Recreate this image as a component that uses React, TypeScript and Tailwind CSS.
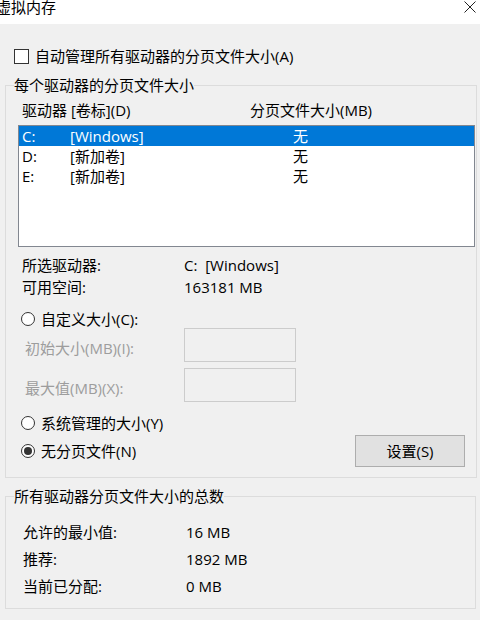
import React from "react";

const font = { fontFamily: '"Open Sans", "Noto Sans CJK SC", sans-serif' };

function Radio({ checked }: { checked?: boolean }) {
  return (
    <span className="w-[14px] h-[14px] rounded-full border border-[#333333] bg-white flex items-center justify-center shrink-0">
      {checked && <span className="w-[8px] h-[8px] rounded-full bg-[#333333]" />}
    </span>
  );
}

const drives = [
  { d: "C:", label: "[Windows]", size: "无", sel: true },
  { d: "D:", label: "[新加卷]", size: "无", sel: false },
  { d: "E:", label: "[新加卷]", size: "无", sel: false },
];

export default function App() {
  return (
    <div
      className="w-[480px] h-[620px] flex flex-col overflow-hidden text-[15px] text-black bg-[#f0f0f0]"
      style={font}
    >
      {/* Title bar */}
      <div className="h-[24px] bg-white flex justify-between items-start shrink-0">
        <span className="ml-[-4px] mt-[-3px] leading-[20px] text-[15px] text-black">虚拟内存</span>
        <svg width="12" height="12" viewBox="0 0 12 12" className="mt-[1px] mr-[4px]">
          <path d="M0.5 0.5 L11.5 11.5 M11.5 0.5 L0.5 11.5" stroke="#222" strokeWidth="1" fill="none" />
        </svg>
      </div>

      {/* Body */}
      <div className="flex-1 flex flex-col">
        {/* Checkbox */}
        <div className="mt-[22px] h-[20px] flex items-center pl-[14px] gap-[6px]">
          <span className="w-[15px] h-[15px] border border-[#333333] bg-white shrink-0" />
          <span className="leading-[20px]">自动管理所有驱动器的分页文件大小(A)</span>
        </div>

        {/* Group 1 */}
        <fieldset className="mt-[9px] ml-[5px] w-[472px] border border-[#dcdcdc] p-0 m-0 min-w-0">
          <legend className="ml-[8px] px-0 leading-[20px]">每个驱动器的分页文件大小</legend>
          <div className="flex flex-col pb-[10px]">
            <div className="mt-[5px] h-[20px] flex items-center pl-[16px] leading-[20px]">
              <span className="w-[228px]">驱动器 [卷标](D)</span>
              <span>分页文件大小(MB)</span>
            </div>
            <div className="mt-[5px] ml-[12px] mr-[1px] h-[122px] border border-[#828790] bg-white flex flex-col">
              {drives.map((r) => (
                <div
                  key={r.d}
                  className={
                    r.sel
                      ? "h-[20px] flex items-center pl-[3px] bg-[#0078d7] text-white leading-[20px]"
                      : "h-[20px] flex items-center pl-[3px] leading-[20px]"
                  }
                >
                  <span className="w-[48px]">{r.d}</span>
                  <span className="w-[223px]">{r.label}</span>
                  <span>{r.size}</span>
                </div>
              ))}
            </div>

            <div className="mt-[7px] h-[22px] flex items-center pl-[16px]">
              <span className="w-[162px]">所选驱动器:</span>
              <span className="whitespace-pre">C:  [Windows]</span>
            </div>
            <div className="h-[22px] flex items-center pl-[16px]">
              <span className="w-[162px]">可用空间:</span>
              <span>163181 MB</span>
            </div>

            <div className="mt-[12px] h-[18px] flex items-center pl-[15px] gap-[6px]">
              <Radio />
              <span className="leading-[18px]">自定义大小(C):</span>
            </div>
            <div className="h-[34px] flex items-center pl-[19px] text-[#9d9d9d]">
              <span className="w-[159px] pt-[6px] leading-[20px]">初始大小(MB)(I):</span>
              <span className="w-[112px] h-[34px] border border-[#cccccc] bg-[#f0f0f0]" />
            </div>
            <div className="mt-[6px] h-[34px] flex items-center pl-[19px] text-[#9d9d9d]">
              <span className="w-[159px] pt-[6px] leading-[20px]">最大值(MB)(X):</span>
              <span className="w-[112px] h-[34px] border border-[#cccccc] bg-[#f0f0f0]" />
            </div>

            <div className="mt-[11px] h-[20px] flex items-center pl-[15px] gap-[6px]">
              <Radio />
              <span className="leading-[20px]">系统管理的大小(Y)</span>
            </div>
            <div className="mt-[2px] h-[32px] flex items-center pl-[15px] gap-[6px] pr-[11px]">
              <Radio checked />
              <span className="leading-[20px]">无分页文件(N)</span>
              <button className="ml-auto w-[110px] h-[32px] bg-[#e1e1e1] border border-[#adadad] text-[15px] leading-[20px] text-black">
                设置(S)
              </button>
            </div>
          </div>
        </fieldset>

        {/* Group 2 */}
        <fieldset className="mt-[8px] ml-[5px] w-[471px] border border-[#dcdcdc] p-0 m-0 min-w-0">
          <legend className="ml-[8px] px-0 leading-[20px]">所有驱动器分页文件大小的总数</legend>
          <div className="flex flex-col pt-[13px] pb-[8px]">
            <div className="h-[27px] flex items-center pl-[17px]">
              <span className="w-[163px]">允许的最小值:</span>
              <span>16 MB</span>
            </div>
            <div className="h-[27px] flex items-center pl-[17px]">
              <span className="w-[163px]">推荐:</span>
              <span>1892 MB</span>
            </div>
            <div className="h-[27px] flex items-center pl-[17px]">
              <span className="w-[163px]">当前已分配:</span>
              <span>0 MB</span>
            </div>
          </div>
        </fieldset>
      </div>
    </div>
  );
}
